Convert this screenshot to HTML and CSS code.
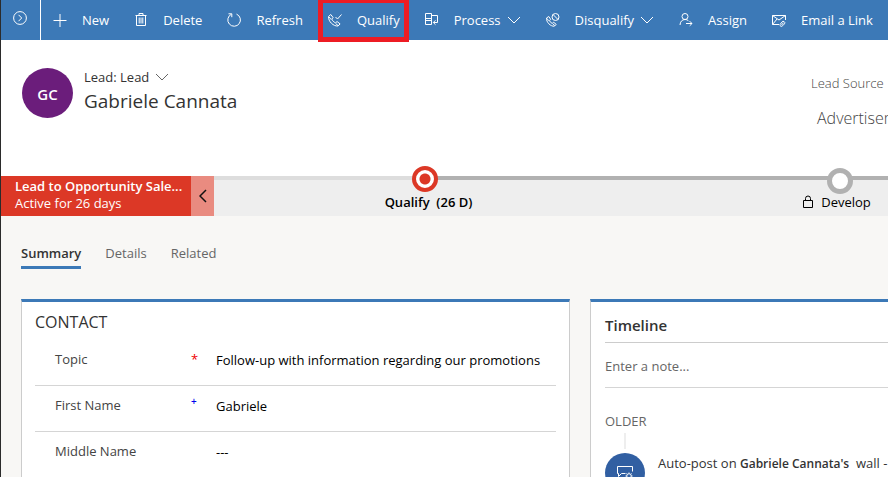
FILE: index.html
```html
<!DOCTYPE html>
<html lang="en">
<head>
<meta charset="utf-8">
<title>Lead: Gabriele Cannata</title>
<link rel="stylesheet" href="styles.css">
</head>
<body>
<nav class="commands" aria-label="Commands">
  <button class="expand" aria-label="Expand navigation"><svg class="icon" viewBox="0 0 16 16"><circle cx="8" cy="8" r="6.4"/><path d="M6.5 4.8 9.7 8 6.5 11.2"/></svg></button>
  <button class="command"><svg class="icon" viewBox="0 0 16 16"><path d="M1.5 8.5h13M8 2v13"/></svg><span>New</span></button>
  <button class="command"><svg class="icon" viewBox="0 0 16 16"><path d="M2.5 3.5h11M6 3.5v-2h4v2M3.5 3.5v10h9v-10M6.2 5.5v6M8 5.5v6M9.8 5.5v6"/></svg><span>Delete</span></button>
  <button class="command"><svg class="icon" viewBox="0 0 16 16"><path d="M10.5 2.1a6.3 6.3 0 1 1-5.2.2M2.500 1.800h3.300v3.400"/></svg><span>Refresh</span></button>
  <button class="command highlighted"><svg class="icon" viewBox="0 0 16 16"><path d="M1.500 4.500 3.800 2.500l2.200 3-1.200 1.600c.7 1.700 1.900 2.900 3.600 3.700l1.700-1.200 3 2.300-2 2.100C6.500 14.500 1.200 9.500 1.500 4.500ZM8.500 5l2 2 4-4.500M2.200 5l1.800 2.500M8.700 11.500l2.300 2"/></svg><span>Qualify</span></button>
  <button class="command"><svg class="icon" viewBox="0 0 16 16"><path d="M1.500 1.500h6v11h-6zM1.500 6.500h6M1.500 8.500h6M7.500 3.500h6v7H9.500M11.500 8.300 9.300 10.500l2.200 2.200"/></svg><span>Process</span><svg class="chevron" viewBox="0 0 14 8"><path d="m1 1 6 6 6-6"/></svg></button>
  <button class="command"><svg class="icon" viewBox="0 0 16 16"><circle cx="10.500" cy="5" r="3.500"/><path d="m8 2.500 5 5M1.500 6 3.800 4.500l1.800 2.800-1.100 1.400c.6 1.300 1.400 2.100 2.700 2.700l1.500-1.100 2.500 2.100-1.800 1.800C5.500 14.500 1.200 10.300 1.500 6ZM2 6.500l1.600 2.200M7.800 11.800l2 1.800"/></svg><span>Disqualify</span><svg class="chevron" viewBox="0 0 14 8"><path d="m1 1 6 6 6-6"/></svg></button>
  <button class="command"><svg class="icon" viewBox="0 0 16 16"><circle cx="7" cy="4.500" r="3"/><path d="M2 13c.2-3.200 2-5.500 5-5.500 1.700 0 2.900.6 3.700 1.700M8 11.500h6M11.700 9.200l2.300 2.300-2.300 2.300"/></svg><span>Assign</span></button>
  <button class="command"><svg class="icon" viewBox="0 0 16 16"><path d="M8 12.500H1.500v-9h13V8M1.500 3.500 8 8l6.500-4.500M1.500 12.500 6 7"/><path d="m9 12.500 2-2.500a1.500 1.500 0 0 1 2.500 1.800l-1.800 1.900A1.500 1.500 0 0 1 9 12.500Zm1.500.5 2-2.300"/></svg><span>Email a Link</span></button>
</nav>

<header class="record">
  <div class="avatar">GC</div>
  <div class="identity">
    <button class="form-switch">Lead: Lead<svg class="chevron" viewBox="0 0 14 8"><path d="m1 1 6 6 6-6"/></svg></button>
    <h1>Gabriele Cannata</h1>
  </div>
  <dl class="source"><dt>Lead Source</dt><dd>Advertisement</dd></dl>
</header>

<section class="process" aria-label="Business process">
  <div class="process-name"><strong>Lead to Opportunity Sale...</strong><span>Active for 26 days</span></div>
  <button class="collapse" aria-label="Previous stages"><svg viewBox="0 0 8 14"><path d="M7 1 1 7l6 6"/></svg></button>
  <ol class="stages">
    <li class="stage active"><span class="marker"></span><span class="stage-label">Qualify&nbsp; (26 D)</span></li>
    <li class="stage"><span class="marker"></span><span class="stage-label"><svg class="lock" viewBox="0 0 12 14"><path d="M1.500 5.500h9v7h-9zM3.500 5.500V3.500a2.500 2.500 0 0 1 5 0v2"/></svg>Develop</span></li>
  </ol>
</section>

<nav class="tabs" aria-label="Form tabs">
  <a class="tab current" href="#summary">Summary</a>
  <a class="tab" href="#details">Details</a>
  <a class="tab" href="#related">Related</a>
</nav>

<main class="cards" id="summary">
  <section class="card">
    <h2>CONTACT</h2>
    <div class="field"><label for="topic">Topic</label><span class="required">*</span><input id="topic" value="Follow-up with information regarding our promotions"></div>
    <div class="field"><label for="first">First Name</label><span class="recommended">+</span><input id="first" value="Gabriele"></div>
    <div class="field"><label for="middle">Middle Name</label><span></span><input id="middle" value="---"></div>
  </section>
  <section class="card timeline">
    <h2>Timeline</h2>
    <input class="note" aria-label="Note" placeholder="Enter a note...">
    <h3>OLDER</h3>
    <div class="thread"></div>
    <article class="post">
      <div class="post-icon"><svg viewBox="0 0 18 18"><path d="M9.500 9.500h-4l-3 3v-3h-1v-7h15v5"/><circle cx="13" cy="12" r="2.300"/><path d="M13 8.500v1M13 14.500v1M9.500 12h1M15.500 12h1M10.500 9.500l.8.8M14.700 13.700l.8.8M15.500 9.500l-.8.8M11.300 13.700l-.8.8"/></svg></div>
      <p>Auto-post on <strong>Gabriele Cannata's</strong>&nbsp; wall -</p>
    </article>
  </section>
</main>
</body>
</html>
```

FILE: styles.css
```css
* { box-sizing: border-box; }

body {
  margin: 0;
  min-height: 100vh;
  overflow: hidden;
  border-left: 1px solid #2b2b2b;
  background: #f8f7f5;
  color: #333;
  font: 13px/20px "Open Sans", "Noto Sans", sans-serif;
}

button, input { font: inherit; color: inherit; background: none; border: 0; padding: 0; }
h1, h2, h3, p, dl, dd, ol { margin: 0; padding: 0; }
strong { font-weight: 600; }
svg { display: block; flex: none; fill: none; stroke: currentColor; }

.commands { display: flex; height: 40px; background: #3c79b7; color: #fff; }
.expand { display: flex; flex: none; align-items: center; width: 40px; padding: 0 0 4px 11px; border-right: 1px solid #fff; }
.command { position: relative; display: flex; flex: none; align-items: center; padding: 0 13px 0 11px; white-space: nowrap; }
.icon { width: 16px; height: 16px; }
.command .icon { margin-right: 14px; }
.chevron { width: 14px; height: 8px; margin-left: 6px; }
.highlighted::after { content: ""; position: absolute; inset: 0 4px -2px 2px; border: 5px solid #ed1c24; border-top-width: 3px; }

.record { display: flex; height: 136px; padding: 27px 0 0 21px; background: #fff; white-space: nowrap; }
.avatar { flex: none; width: 51px; height: 50px; margin: 1px 11px 0 0; border-radius: 50%; background: #6b1d7b; color: #fff; font-size: 15px; font-weight: 600; line-height: 52px; text-align: center; }
.identity { flex: 1; }
.form-switch { display: flex; align-items: center; }
.form-switch .chevron { color: #666; }
h1 { font-size: 19px; font-weight: 400; line-height: 28px; }
.source { width: 77px; padding-top: 6px; color: #444; }
.source dt { font-weight: 300; }
.source dd { padding: 13px 0 0 6px; font-size: 16px; font-weight: 300; line-height: 24px; }

.process { display: flex; height: 40px; background: #eee; white-space: nowrap; }
.process-name { display: flex; flex-direction: column; flex: none; width: 190px; padding: 2px 0 0 14px; background: #dc3826; color: #fff; line-height: 17px; }
.collapse { display: flex; flex: none; align-items: center; justify-content: center; width: 23px; background: #e98b80; color: #111; }
.collapse svg { width: 8px; height: 14px; stroke-width: 1.5; }
.stages { display: flex; flex: 1; min-width: 0; padding-left: 3px; list-style: none; background: linear-gradient(90deg, #ddd 211px, #b1b1b1 211px) 0 0 / 100% 4px no-repeat; }
.stage { position: relative; flex: 0 0 415px; padding-top: 16px; color: #000; }
.stage-label { display: flex; align-items: center; justify-content: center; }
.stage + .stage .stage-label { padding-right: 6px; }
.marker { position: absolute; top: -8px; left: calc(50% - 13px); width: 26px; height: 26px; border: 5px solid #b1b1b1; border-radius: 50%; background: #fff; }
.active .marker { top: -10px; border: 4px solid #dc3826; background: radial-gradient(circle, #dc3826 5px, #fff 6px); }
.active .stage-label { padding-left: 8px; font-weight: 600; }
.lock { width: 12px; height: 14px; margin-right: 7px; }

.tabs { display: flex; gap: 24px; padding: 27px 0 30px 20px; }
.tab { padding-bottom: 3px; border-bottom: 3px solid transparent; color: #666; text-decoration: none; }
.current { border-color: #3c79b7; color: #333; font-weight: 600; }

.cards { display: grid; grid-template-columns: 549fr 298fr; gap: 20px; padding-left: 20px; }
.card { min-width: 0; padding: 8px 13px; border: 1px solid #ccc; border-top: 3px solid #3c79b7; background: #fff; }
h2 { font-size: 16px; font-weight: 400; line-height: 24px; }
.field { display: grid; grid-template-columns: 136px 25px 1fr; align-items: start; height: 46px; padding: 9px 0 0 20px; border-bottom: 1px solid #d5d5d5; }
.card h2 + .field { margin-top: 6px; }
.field label { color: #444; }
.field input { width: 100%; height: 22px; color: #000; }
.required { color: #e00; }
.recommended { color: #00e; font-size: 10px; font-weight: 600; line-height: 12px; }

.timeline { padding-right: 0; padding-left: 14px; border-right: 0; }
.timeline h2 { padding: 3px 0 5px; border-bottom: 1px solid #ccc; font-size: 15px; font-weight: 600; }
.note { display: block; width: 100%; height: 45px; padding-top: 2px; border-bottom: 1px solid #d5d5d5; }
.note::placeholder { color: #666; opacity: 1; }
h3 { margin-top: 23px; color: #666; font-size: 13px; font-weight: 400; line-height: 20px; }
.thread { width: 2px; height: 16px; margin: 2px 0 4px 19px; background: #eee; }
.post { display: flex; gap: 13px; overflow: hidden; white-space: nowrap; }
.post strong { font-size: 12px; }
.post-icon { display: grid; flex: none; place-items: center; width: 40px; height: 40px; border-radius: 50%; background: #315fa2; color: #fff; }
.post-icon svg { width: 18px; height: 18px; }
```
